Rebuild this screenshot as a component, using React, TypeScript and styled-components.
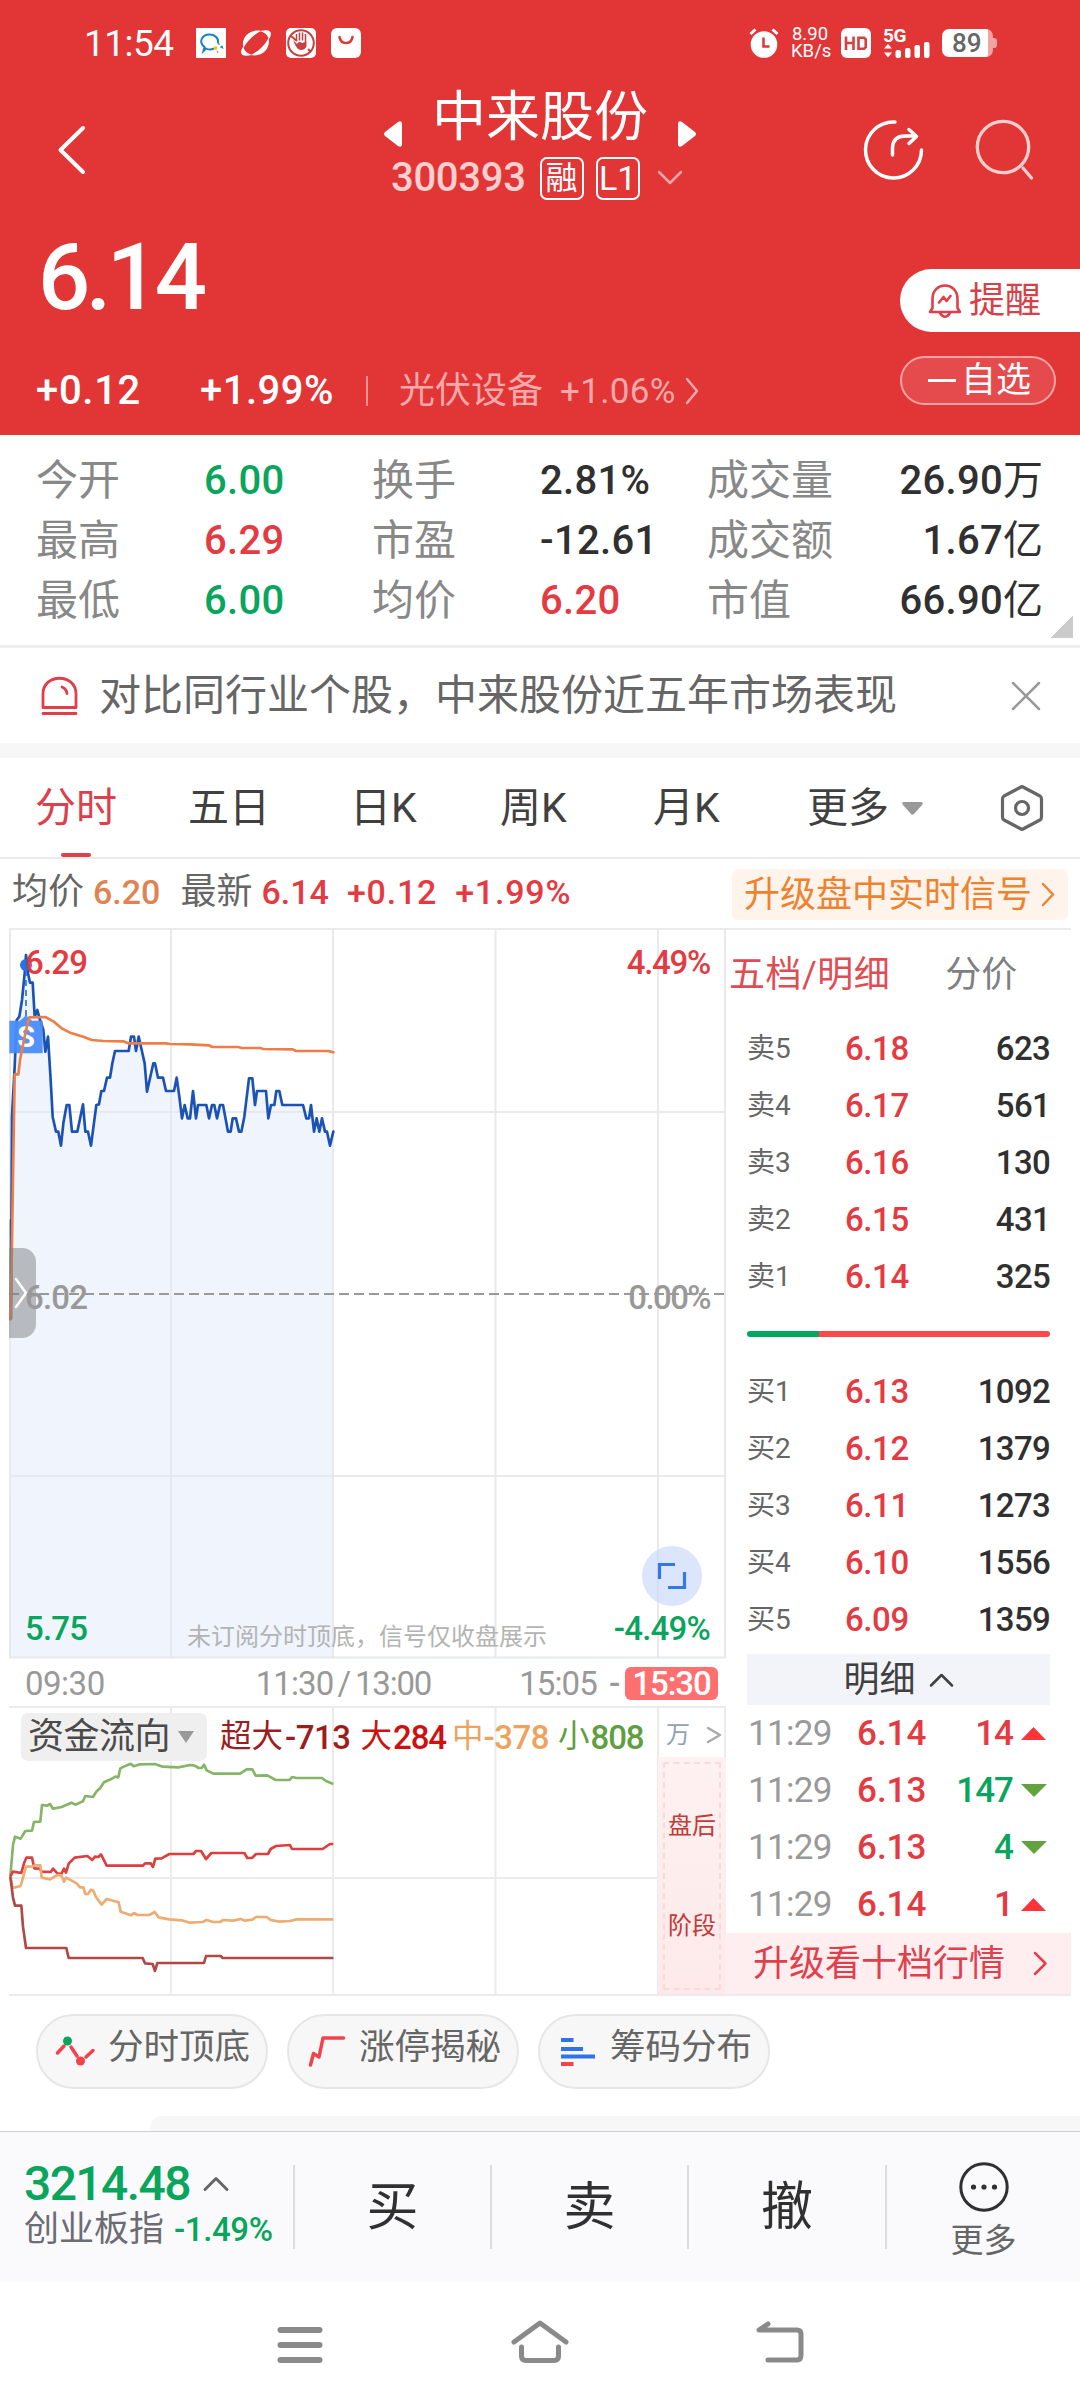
import React from 'react';
import styled, { createGlobalStyle } from 'styled-components';

const RED = '#e23536';
const UP = '#e43b43';
const DOWN = '#0aa55c';
const LINE = '#ebebeb';

const GlobalStyle = createGlobalStyle`
  * { box-sizing: border-box; }
  body {
    margin: 0;
    background: #fff;
    font-family: Roboto, "Noto Sans CJK SC", sans-serif;
  }
  svg { display: block; flex: none; overflow: visible; }
`;

const Screen = styled.div`
  width: 1080px;
  height: 2408px;
  overflow: hidden;
  display: flex;
  flex-direction: column;
`;

const Text = styled.span<{ $size: number; $color?: string; $weight?: number; $ls?: number; $ml?: number }>`
  display: block;
  flex: none;
  line-height: 1;
  white-space: pre;
  font-size: ${p => p.$size}px;
  color: ${p => p.$color ?? 'inherit'};
  font-weight: ${p => p.$weight ?? 400};
  letter-spacing: ${p => p.$ls ?? 0}px;
  margin-left: ${p => p.$ml ?? 0}px;
`;

const Gap = styled.i<{ $w: number }>`
  width: ${p => p.$w}px;
  flex: none;
`;

/* ---------- header ---------- */

const Header = styled.header`
  height: 435px;
  flex: none;
  background: ${RED};
  color: #fff;
`;

const StatusBar = styled.div`
  height: 88px;
  padding: 0 83px 2px 84px;
  display: flex;
  align-items: center;
  justify-content: space-between;
`;

const StatusGroup = styled.div<{ $gap: number }>`
  display: flex;
  align-items: center;
  gap: ${p => p.$gap}px;
`;

const Speed = styled.div`
  width: 38px;
  text-align: center;
  font-size: 18.5px;
  line-height: 17px;
  font-weight: 400;
  white-space: nowrap;
`;

const Battery = styled.div`
  display: flex;
  align-items: center;
`;

const BatteryBody = styled.div`
  width: 51px;
  height: 28px;
  border-radius: 7px;
  background: linear-gradient(90deg, #fff 46px, #f4a3a3 46px);
  color: #666;
  font-size: 26px;
  font-weight: 500;
  line-height: 29px;
  padding-left: 10px;
`;

const BatteryTip = styled.div`
  width: 4px;
  height: 10px;
  border-radius: 0 3px 3px 0;
  background: #f4a3a3;
`;

const TitleBar = styled.div`
  height: 122px;
  display: grid;
  grid-template-columns: 384px 312px 1fr;
`;

const BackSlot = styled.div`
  padding: 36px 0 0 56px;
`;

const TitleStack = styled.div`
  padding-top: 3px;
  display: flex;
  flex-direction: column;
`;

const NameRow = styled.div`
  height: 54px;
  display: flex;
  justify-content: space-between;
  svg { margin-top: 29px; }
`;

const CodeRow = styled.div`
  height: 44px;
  margin-top: 11px;
  padding-left: 7px;
  display: flex;
  align-items: center;
`;

const Badge = styled.span<{ $ml: number }>`
  width: 44px;
  height: 43px;
  margin-left: ${p => p.$ml}px;
  border: 2px solid #fff;
  border-radius: 7px;
  display: flex;
  align-items: center;
  justify-content: center;
`;

const ActionSlot = styled.div`
  display: flex;
  gap: 50px;
  padding: 30px 0 0 166px;
`;

const Quote = styled.div`
  height: 225px;
  display: grid;
  grid-template-columns: 900px 180px;
`;

const QuoteLeft = styled.div`
  padding: 22px 0 0 36px;
`;

const ChangeRow = styled.div`
  height: 40px;
  margin-top: 47px;
  display: flex;
  align-items: center;
`;

const Divider = styled.i<{ $h: number; $color: string }>`
  width: 2px;
  height: ${p => p.$h}px;
  background: ${p => p.$color};
  flex: none;
`;

const QuoteRight = styled.div`
  padding-top: 59px;
  display: flex;
  flex-direction: column;
  gap: 24px;
`;

const AlertButton = styled.div`
  height: 63px;
  border-radius: 32px 0 0 32px;
  background: #fff;
  display: flex;
  align-items: center;
  padding-left: 28px;
`;

const WatchButton = styled.div`
  width: 156px;
  height: 49px;
  border-radius: 25px;
  border: 2px solid #f2a3a4;
  background: #e54b4c;
  display: flex;
  align-items: center;
  padding-left: 26px;
`;

const Dash = styled.i`
  width: 28px;
  height: 3px;
  background: #fff;
  margin-right: 5px;
`;

/* ---------- stats ---------- */

const Stats = styled.section`
  position: relative;
  height: 213px;
  flex: none;
  padding: 16px 37px 0 36px;
  border-bottom: 3px solid #eeeeee;
  display: grid;
  grid-template-columns: 168px 168px 168px 167px 1fr auto;
  grid-auto-rows: 60px;
  align-items: center;
`;

const StatValue = styled.div`
  display: flex;
  align-items: center;
  justify-content: flex-end;
`;

const StatPlain = styled.div`
  display: flex;
  align-items: center;
`;

const Corner = styled.i`
  position: absolute;
  right: 7px;
  bottom: 7px;
  width: 23px;
  height: 23px;
  background: linear-gradient(135deg, transparent 50%, #cbcbcb 50%);
`;

const Banner = styled.section`
  height: 95px;
  flex: none;
  padding: 0 39px 0 40px;
  display: flex;
  align-items: center;
`;

const Spacer = styled.div`
  flex: 1;
`;

const Gutter = styled.div`
  height: 15px;
  flex: none;
  background: #f7f7f7;
`;

/* ---------- tabs ---------- */

const Tabs = styled.nav`
  height: 101px;
  flex: none;
  border-bottom: 2px solid ${LINE};
  display: grid;
  grid-template-columns: 188px 162px 150px 153px 154px 191px 1fr;
`;

const Tab = styled.div<{ $active?: boolean; $pad: number }>`
  padding: 1px 0 0 ${p => p.$pad}px;
  display: flex;
  align-items: center;
  color: ${p => (p.$active ? '#dc404a' : '#404040')};
  position: relative;
`;

const Underline = styled.i`
  position: absolute;
  left: 61px;
  bottom: 0;
  width: 30px;
  height: 4px;
  border-radius: 2px;
  background: #dc404a;
`;

const InfoRow = styled.div`
  height: 69px;
  flex: none;
  padding: 0 12px 3px 12px;
  display: flex;
  align-items: center;
`;

const SignalButton = styled.div`
  width: 336px;
  height: 51px;
  margin-top: 5px;
  border-radius: 7px;
  background: #fef4ec;
  padding: 0 12px;
  display: flex;
  align-items: center;
`;

/* ---------- chart area ---------- */

const Board = styled.main`
  height: 1068px;
  flex: none;
  margin: 0 9px;
  border-top: 2px solid ${LINE};
  border-bottom: 2px solid ${LINE};
  display: grid;
  grid-template-columns: 717px 345px;
`;

const Charts = styled.div`
  display: flex;
  flex-direction: column;
`;

const PricePane = styled.div`
  position: relative;
  height: 729px;
`;

const ChartLabel = styled.div<{ $x?: number; $right?: number; $y: number; $size?: number; $color: string; $weight?: number; $ls?: number }>`
  position: absolute;
  ${p => (p.$right !== undefined ? `right: ${p.$right}px;` : `left: ${p.$x}px;`)}
  top: ${p => p.$y}px;
  font-size: ${p => p.$size ?? 33}px;
  font-weight: ${p => p.$weight ?? 500};
  letter-spacing: ${p => p.$ls ?? -0.8}px;
  line-height: 1;
  white-space: pre;
  color: ${p => p.$color};
`;

const ExpandButton = styled.div`
  position: absolute;
  right: 24px;
  bottom: 53px;
  width: 60px;
  height: 60px;
  border-radius: 50%;
  background: rgba(200, 217, 252, 0.65);
  display: flex;
  align-items: center;
  justify-content: center;
`;

const DrawerHandle = styled.div`
  position: absolute;
  left: 0;
  top: 318px;
  width: 27px;
  height: 90px;
  border-radius: 0 14px 14px 0;
  background: rgba(128, 128, 128, 0.5);
  display: flex;
  align-items: center;
  padding-left: 5px;
`;

const TimeAxis = styled.div`
  height: 47px;
  padding: 2px 8px 0 16px;
  display: flex;
  align-items: center;
  color: #999;
`;

const ClosingTag = styled.div`
  width: 93px;
  height: 33px;
  border-radius: 6px;
  background: #fe7070;
  display: flex;
  align-items: center;
  justify-content: center;
`;

const FlowPane = styled.div`
  position: relative;
  flex: 1;
  border-top: 2px solid ${LINE};
`;

const FlowHeader = styled.div`
  position: absolute;
  inset: 5px 0 auto 12px;
  height: 48px;
  display: flex;
  align-items: center;
`;

const FlowChip = styled.div`
  width: 186px;
  height: 48px;
  border-radius: 7px;
  background: #efefef;
  padding-left: 7px;
  margin-right: 13px;
  display: flex;
  align-items: center;
  gap: 8px;
`;

const UnitCell = styled.div`
  position: absolute;
  left: 650px;
  right: 2px;
  top: 0;
  height: 49px;
  padding: 5px 2px 0 7px;
  background: #fff;
  display: flex;
  align-items: center;
  justify-content: space-between;
`;

const AfterHours = styled.div`
  position: absolute;
  right: 0;
  top: 49px;
  bottom: 0;
  width: 68px;
  padding: 5px 5px 4px 5px;
  background: linear-gradient(#fef1f1, #fde9e9);
`;

const AfterHoursInner = styled.div`
  height: 100%;
  border: 2px dashed #f8dadc;
  border-radius: 2px;
  padding-top: 50px;
  display: flex;
  flex-direction: column;
  align-items: center;
  gap: 76px;
`;

/* ---------- order book ---------- */

const Book = styled.aside`
  display: flex;
  flex-direction: column;
`;

const BookTabs = styled.div`
  height: 90px;
  padding-left: 3px;
  display: flex;
  align-items: center;
`;

const BookRow = styled.div`
  height: 57px;
  padding: 0 21px 0 21px;
  display: grid;
  grid-template-columns: 98px 1fr auto;
  align-items: center;
`;

const RatioBar = styled.div`
  height: 6px;
  margin: 26px 21px;
  border-radius: 3px;
  background: linear-gradient(90deg, #00a95f 72px, #fb484b 72px);
`;

const DetailHeader = styled.div`
  height: 51px;
  margin: 6px 21px 0;
  background: #f3f4f9;
  display: flex;
  align-items: center;
  justify-content: center;
  gap: 13px;
`;

const TradeRow = styled.div`
  height: 57px;
  padding: 0 24px 0 22px;
  display: grid;
  grid-template-columns: 109px 1fr auto 26px;
  align-items: center;
`;

const TradeQty = styled.div`
  padding-right: 8px;
`;

const Upgrade = styled.div`
  margin-top: auto;
  height: 61px;
  background: #feeef0;
  padding: 0 23px 0 27px;
  display: flex;
  align-items: center;
  justify-content: space-between;
`;

/* ---------- footer ---------- */

const Tools = styled.div`
  height: 120px;
  flex: none;
  padding: 18px 0 0 36px;
  display: flex;
  gap: 19px;
`;

const Pill = styled.div`
  width: 232px;
  height: 75px;
  border: 2px solid #e6e6e6;
  border-radius: 38px;
  background: #f7f7f7;
  padding: 0 0 8px 17px;
  display: flex;
  align-items: center;
  gap: 13px;
  svg { margin-top: 7px; }
`;

const NextCard = styled.div`
  height: 15px;
  flex: none;
  margin-left: 150px;
  border-radius: 12px 0 0 0;
  background: #f7f7f7;
`;

const TradeBar = styled.footer`
  height: 151px;
  flex: none;
  border-top: 1px solid #cfcfcf;
  background: #fafafc;
  display: grid;
  grid-template-columns: 293px 2px 195px 2px 195px 2px 196px 2px 1fr;
  align-items: center;
`;

const IndexCell = styled.div`
  padding: 0 0 3px 24px;
  display: flex;
  flex-direction: column;
  gap: 2px;
`;

const Line = styled.div<{ $h: number }>`
  height: ${p => p.$h}px;
  display: flex;
  align-items: center;
`;

const ActionCell = styled.div<{ $pt?: number }>`
  padding-top: ${p => p.$pt ?? 2}px;
  display: flex;
  flex-direction: column;
  align-items: center;
  color: #303030;
`;

const NavBar = styled.nav`
  flex: 1;
  padding: 37px 0 0 277px;
  display: flex;
  align-items: flex-start;
`;

/* ---------- data ---------- */

const K = '#888';
const D = '#303030';

const stats: [string, string, string][][] = [
  [['今开', '6.00', DOWN], ['换手', '2.81%', D], ['成交量', '26.90万', D]],
  [['最高', '6.29', UP], ['市盈', '-12.61', D], ['成交额', '1.67亿', D]],
  [['最低', '6.00', DOWN], ['均价', '6.20', UP], ['市值', '66.90亿', D]],
];

const asks: [string, string, string][] = [
  ['卖5', '6.18', '623'],
  ['卖4', '6.17', '561'],
  ['卖3', '6.16', '130'],
  ['卖2', '6.15', '431'],
  ['卖1', '6.14', '325'],
];

const bids: [string, string, string][] = [
  ['买1', '6.13', '1092'],
  ['买2', '6.12', '1379'],
  ['买3', '6.11', '1273'],
  ['买4', '6.10', '1556'],
  ['买5', '6.09', '1359'],
];

const trades: [string, string, boolean][] = [
  ['6.14', '14', true],
  ['6.13', '147', false],
  ['6.13', '4', false],
  ['6.14', '1', true],
];

const pricePoints =
  '33,1195 36,590 44,440 50,300 58,290 66,240 74,160 78,105 84,160 90,188 98,188 104,290 112,270 120,300 130,330 136,395 144,350 152,480 158,590 168,635 175,635 183,677 190,610 200,555 208,555 216,635 232,635 249,553 256,635 264,635 273,677 289,555 297,553 304,513 312,513 321,473 330,473 337,430 345,393 386,393 393,350 402,350 408,393 416,350 425,390 434,430 441,515 460,430 465,430 474,473 489,473 498,513 522,513 530,473 538,530 546,595 554,555 563,595 570,595 579,513 588,595 594,555 619,555 627,595 636,555 643,555 651,595 660,555 669,555 684,635 692,635 698,595 708,595 717,635 724,635 733,590 747,475 757,475 765,555 771,513 798,513 805,595 813,555 823,555 829,513 838,513 847,555 909,555 919,595 927,595 933,555 942,635 950,595 958,635 966,595 975,635 981,635 990,677 1000,635';

const avgPoints =
  '31,1198 33,1150 44,463 55,463 60,420 78,330 88,292 136,291 160,304 185,325 210,338 250,350 275,360 310,363 370,364 385,370 498,370 510,372 570,373 628,376 636,381 715,381 725,384 780,384 790,387 878,388 888,393 985,393 1000,397';

const flows: [string, string][] = [
  ['#86b567', '31,830 39,735 45,710 62,716 76,693 96,692 102,666 121,665 126,615 142,617 150,612 159,626 185,621 214,608 226,614 249,604 256,588 279,591 290,574 300,565 312,547 332,538 346,530 355,532 361,505 378,497 392,491 401,499 420,493 465,492 488,500 535,502 570,495 584,497 596,504 605,504 612,494 620,511 640,521 720,521 740,508 757,508 767,527 802,526 827,540 868,540 877,531 890,534 966,534 978,543 1000,552'],
  ['#db3f3f', '31,830 39,815 64,819 72,790 79,773 96,773 103,805 118,806 126,815 152,816 159,806 172,820 184,822 192,806 198,818 206,791 224,773 262,768 277,780 285,770 295,771 303,763 320,797 428,797 436,790 452,790 459,801 466,776 485,775 508,762 580,762 588,753 603,753 618,777 634,759 733,759 742,774 756,774 768,762 804,762 812,747 828,738 870,735 876,747 968,747 990,732 1000,732'],
  ['#edac72', '31,830 38,864 62,858 70,830 78,800 98,799 104,796 121,796 125,833 150,838 172,825 184,826 192,845 198,833 230,850 240,862 250,862 256,882 264,882 273,869 280,872 288,891 305,914 320,897 350,905 356,907 362,935 393,946 402,939 412,945 448,945 464,936 476,952 508,958 545,961 570,968 608,966 620,960 640,966 660,966 670,960 700,962 722,957 735,962 757,959 768,951 800,951 812,960 838,965 870,963 890,958 1000,958'],
  ['#b04845', '31,830 39,893 45,917 64,917 69,980 78,1044 199,1044 206,1074 428,1074 435,1090 458,1092 465,1113 472,1089 612,1089 618,1068 662,1068 668,1074 1000,1074'],
];

/* ---------- icons ---------- */

const Chevron = ({ w, h, d, color, sw = 2.5 }: { w: number; h: number; d: string; color: string; sw?: number }) => (
  <svg width={w} height={h} viewBox={`0 0 ${w} ${h}`} fill="none" stroke={color} strokeWidth={sw} strokeLinecap="round" strokeLinejoin="round">
    <path d={d} />
  </svg>
);

const ChatIcon = () => (
  <svg width="30" height="30" viewBox="0 0 30 30">
    <rect width="30" height="30" fill="#fff" />
    <path d="M18 20.500 Q13.500 22.500 10 20.500 L7.500 23 L8.500 19 C2 14 6 6.500 13.500 6.500 C19.500 6.500 23 11 22 15" fill="none" stroke="#1d7fc4" strokeWidth="2" />
    <path d="M21 15.500l2-1 1 3z" fill="#3aa648" />
    <path d="M23.500 19l3-1.500 1 3.500z" fill="#1d7fc4" />
    <path d="M17.500 19l3-1 1 3-3 1z" fill="#f4c31f" />
    <path d="M20.500 22l2 2-1 1.500z" fill="#e2702a" />
  </svg>
);

const PlanetIcon = () => (
  <svg width="30" height="30" viewBox="0 0 30 30" fill="#fff">
    <path d="M2.500 20 C-0.500 10 8 0.500 20 3 C12 7 6 13 2.500 20z" />
    <path d="M27.500 10 C30 20 21.500 29.500 10 27 C18 23 24 17 27.500 10z" />
    <path d="M19 3 Q30 0.500 30 6 Q30 8 27.500 12 Q27.500 7 22.500 4.500z" />
    <path d="M11 27 Q0 29.500 0 24 Q0 22 2.500 18 Q2.500 23 7.500 25.500z" />
  </svg>
);

const HandIcon = () => (
  <svg width="30" height="30" viewBox="0 0 30 30">
    <rect width="30" height="30" rx="5" fill="#fff" />
    <g fill="none" stroke="#c8403f" strokeWidth="2">
      <circle cx="15" cy="15" r="12.800" />
      <path d="M5 8 L11 13 M22 21 L25 24" />
    </g>
    <path d="M10.500 6v7M13.500 4.500v8M16.500 4.500v8M19.500 6v8" stroke="#c8403f" strokeWidth="1.500" />
    <path d="M7 12 L11 16 Q13 12.500 16 15 L20.500 13.500 V18 Q19.500 22 15 22 Q10.500 22 7 12z" fill="#c8403f" />
  </svg>
);

const BagIcon = () => (
  <svg width="30" height="30" viewBox="0 0 30 30">
    <rect width="30" height="30" rx="6" fill="#fff" />
    <path d="M8.500 9 q1 6 6.500 6 t6.500-6" fill="none" stroke={RED} strokeWidth="2.500" strokeLinecap="round" />
  </svg>
);

const AlarmIcon = () => (
  <svg width="30" height="30" viewBox="0 0 30 30" fill="none">
    <circle cx="15" cy="16.500" r="13.300" fill="#fff" />
    <path d="M1.500 6 L6.500 1.500 M28.500 6 L23.500 1.500" stroke="#fff" strokeWidth="3" />
    <path d="M14.500 9.500 V18.500 H20.500" stroke={RED} strokeWidth="2.500" />
  </svg>
);

const HdIcon = () => (
  <svg width="30" height="30" viewBox="0 0 30 30">
    <rect width="30" height="30" rx="6" fill="#fff" />
    <path d="M5 8.500V22M12.500 8.500V22M5 15h7.500M17.500 8.500V22M17.500 9.700h5.500l1.700 1.700v7.700l-1.700 1.700h-5.500" fill="none" stroke="#d8403f" strokeWidth="2.600" />
  </svg>
);

const SignalStack = styled.div`
  width: 47px;
  height: 31px;
  display: flex;
  flex-direction: column;
  justify-content: space-between;
  font-size: 19px;
  font-weight: 700;
  line-height: 15px;
  letter-spacing: -0.5px;
`;

const SignalIcon = () => (
  <SignalStack>
    5G
    <svg width="47" height="16" viewBox="0 15 47 16" fill="#fff">
      <path d="M1 20.500l4-4.500 4 4.500zM1 24.500h8l-4 5z" />
      <rect x="12.500" y="22" width="5.500" height="8" rx="2" />
      <rect x="22" y="20" width="5.500" height="10" rx="2" />
      <rect x="31.500" y="17" width="5.500" height="13" rx="2" />
      <rect x="41" y="14" width="5.500" height="16" rx="2" />
    </svg>
  </SignalStack>
);

const ShareIcon = () => (
  <svg width="62" height="62" viewBox="0 0 62 62" fill="none" stroke="#fff" strokeWidth="3.500" strokeLinecap="round" strokeLinejoin="round">
    <path d="M33 4 A28 28 0 1 0 59.500 32" />
    <path d="M30.500 37 V30 Q31 18 43 18 H54 M47 11.500 L54.500 18.500 L47 25.500" />
  </svg>
);

const SearchIcon = () => (
  <svg width="62" height="64" viewBox="0 0 62 64" fill="none" stroke="#fccfcf" strokeWidth="3.300" strokeLinecap="round">
    <circle cx="29" cy="29" r="25.700" />
    <path d="M49 50 L57.500 60" />
  </svg>
);

const BellIcon = () => (
  <svg width="34" height="36" viewBox="0 0 34 36" fill="none" stroke="#de3f49" strokeWidth="2.600" strokeLinejoin="round" strokeLinecap="round">
    <path d="M4.500 25 V16 C4.500 -2 29.500 -2 29.500 16 V25 L32 29 H2z" />
    <path d="M12 30 q5 7.500 10 0" />
    <path d="M11 19.500 L15.500 14 L18.500 18 L22.500 13" />
  </svg>
);

const SirenIcon = () => (
  <svg width="40" height="40" viewBox="0 0 40 40" fill="none" stroke="#de3f49" strokeWidth="2.800" strokeLinecap="round" strokeLinejoin="round">
    <path d="M3 31.500 V18 C3 -3 36 -3 36 18 V31.500z" />
    <path d="M3 37.500 H36 M22 11 Q26.500 13 27 17.500" />
  </svg>
);

const HexIcon = () => (
  <svg width="44" height="48" viewBox="0 0 44 48" fill="none" stroke="#666" strokeWidth="3.200" strokeLinejoin="round">
    <path d="M22 2.500 L40 12 Q41.500 13 41.500 15 V33 Q41.500 35 40 36 L22 45.500 L4 36 Q2.500 35 2.500 33 V15 Q2.500 13 4 12z" />
    <circle cx="22" cy="24" r="6.500" />
  </svg>
);

const Triangle = ({ up }: { up: boolean }) =>
  up ? (
    <svg width="26" height="14" viewBox="0 0 26 14"><path d="M12.500 0 L25 13 H0z" fill="#fb343a" /></svg>
  ) : (
    <svg width="26" height="14" viewBox="0 0 26 14"><path d="M0 0 H26 L13 13z" fill="#62a340" /></svg>
  );

const PriceChart = () => (
  <svg width="717" height="729" viewBox="9 930 717 729">
    <g transform="translate(0 920) scale(0.333333)">
      <polygon points={`31,2214 ${pricePoints} 1000,2214`} fill="#eff4fd" />
    </g>
    <g stroke="#e4e6ea" strokeOpacity=".85" strokeWidth="2" fill="none">
      <path d="M10 930V1658M171 930V1658M333 930V1658M495.500 930V1658M658 930V1658M725 930V1658" />
      <path d="M9 1112H726M9 1476H726M9 1657.500H726" />
    </g>
    <path d="M9 1294H724" stroke="#999" strokeWidth="2" strokeDasharray="10 5" />
    <g transform="translate(0 920) scale(0.333333)" fill="none" strokeLinejoin="round" strokeLinecap="round">
      <polyline points={pricePoints} stroke="#1a52b5" strokeWidth="8" />
      <path d="M78 150V290" stroke="#2d6fd8" strokeWidth="5" strokeDasharray="18 12" strokeLinecap="butt" />
      <circle cx="78" cy="135" r="18" fill="#2273ee" />
      <path d="M28 302H60L78 286L96 302H128V400H28z" fill="#4a8cfb" fillOpacity=".95" />
      <text x="78" y="381" textAnchor="middle" fill="#fff" fontSize="86" fontWeight="700" fontFamily="Roboto">S</text>
      <path d="M31 1198V900" stroke="#1a52b5" strokeWidth="4" />
      <polyline points={avgPoints} stroke="#ee7d48" strokeWidth="8" />
    </g>
  </svg>
);

const FlowChart = () => (
  <svg width="717" height="286" viewBox="9 1708 717 286">
    <path d="M171 1708V1994M333 1708V1994M495.500 1708V1994M658 1708V1994M725 1708V1994M9 1878H658" stroke={LINE} strokeWidth="2" fill="none" />
    <g transform="translate(0 1600) scale(0.333333)" fill="none" strokeWidth="8" strokeLinejoin="round">
      {flows.map(([color, points]) => (
        <polyline key={color} points={points} stroke={color} />
      ))}
    </g>
  </svg>
);

const TopBottomIcon = () => (
  <svg width="40" height="32" viewBox="0 0 40 32" fill="none" stroke="#f0434c" strokeWidth="3.500" strokeLinecap="round">
    <path d="M2.500 18 L9 11 M16 12 L22 21 M31 22 L38 15.500" />
    <circle cx="12.500" cy="6" r="4.500" fill={DOWN} stroke="none" />
    <circle cx="25.500" cy="26" r="4.500" fill="#f0434c" stroke="none" />
  </svg>
);

const LimitIcon = () => (
  <svg width="40" height="32" viewBox="0 0 40 32" fill="none" stroke="#f0434c" strokeWidth="3.500" strokeLinecap="round" strokeLinejoin="round">
    <path d="M4.500 30 L7.500 18.500 L13 22 L17 3 H37.500" />
  </svg>
);

const ChipsIcon = () => (
  <svg width="40" height="32" viewBox="0 0 40 32" fill="none" stroke="#2f73ea" strokeWidth="4">
    <path d="M4 5H16.500M4 14H26M4 21.500H38" />
    <path d="M4 29H16.500" stroke="#f0434c" />
  </svg>
);

const tools: [string, React.ReactNode][] = [
  ['分时顶底', <TopBottomIcon />],
  ['涨停揭秘', <LimitIcon />],
  ['筹码分布', <ChipsIcon />],
];

/* ---------- page ---------- */

const BookLine = ({ row }: { row: [string, string, string] }) => (
  <BookRow>
    <Text $size={28} $color="#666">{row[0]}</Text>
    <Text $size={33} $weight={500} $color={UP} $ls={-0.4}>{row[1]}</Text>
    <Text $size={33} $weight={500} $color={D} $ls={-0.7}>{row[2]}</Text>
  </BookRow>
);

export default function App() {
  return (
    <Screen>
      <GlobalStyle />
      <Header>
        <StatusBar>
          <StatusGroup $gap={22}>
            <Text $size={37} $ls={-0.5}>11:54</Text>
            <StatusGroup $gap={15}>
              <ChatIcon />
              <PlanetIcon />
              <HandIcon />
              <BagIcon />
            </StatusGroup>
          </StatusGroup>
          <StatusGroup $gap={12}>
            <AlarmIcon />
            <Speed>8.90<br />KB/s</Speed>
            <HdIcon />
            <SignalIcon />
            <Battery>
              <BatteryBody>89</BatteryBody>
              <BatteryTip />
            </Battery>
          </StatusGroup>
        </StatusBar>
        <TitleBar>
          <BackSlot>
            <Chevron w={32} h={52} d="M27 4 L4.500 26 L27 48" color="#fff" sw={4} />
          </BackSlot>
          <TitleStack>
            <NameRow>
              <svg width="18" height="28" viewBox="0 0 18 28"><path d="M18 3 Q17 0 14 2 L1 12 Q-1 14 1 16 L14 26 Q17 28 18 25z" fill="#fff" /></svg>
              <Text $size={54}>中来股份</Text>
              <svg width="18" height="28" viewBox="0 0 18 28"><path d="M0 3 Q1 0 4 2 L17 12 Q19 14 17 16 L4 26 Q1 28 0 25z" fill="#fff" /></svg>
            </NameRow>
            <CodeRow>
              <Text $size={40} $weight={500} $color="#fdd0d0" $ls={-0.3}>300393</Text>
              <Badge $ml={14}><Text $size={32}>融</Text></Badge>
              <Badge $ml={12}><Text $size={34}>L1</Text></Badge>
              <Gap $w={17} />
              <Chevron w={26} h={16} d="M2 2 L13 13 L24 2" color="#f3a5a6" />
            </CodeRow>
          </TitleStack>
          <ActionSlot>
            <ShareIcon />
            <SearchIcon />
          </ActionSlot>
        </TitleBar>
        <Quote>
          <QuoteLeft>
            <Text $size={92} $weight={500} $ls={-4.5} $ml={2}>6.14</Text>
            <ChangeRow>
              <Text $size={40} $weight={500} $ls={0.7}>+0.12</Text>
              <Text $size={40} $weight={500} $ml={59} $ls={0.5}>+1.99%</Text>
              <Gap $w={32} />
              <Divider $h={30} $color="#ee8f90" />
              <Text $size={36} $color="#f5a9aa" $ml={31}>光伏设备</Text>
              <Text $size={35} $color="#f5a9aa" $ml={17} $ls={0.3}>+1.06%</Text>
              <Gap $w={8} />
              <Chevron w={16} h={28} d="M3 2 L13 14 L3 26" color="#f5a9aa" />
            </ChangeRow>
          </QuoteLeft>
          <QuoteRight>
            <AlertButton>
              <BellIcon />
              <Text $size={36} $color="#d84048" $ml={7}>提醒</Text>
            </AlertButton>
            <WatchButton>
              <Dash />
              <Text $size={35}>自选</Text>
            </WatchButton>
          </QuoteRight>
        </Quote>
      </Header>

      <Stats>
        {stats.flat().map(([label, value, color], i) => {
          const unit = /[万亿]$/.test(value) ? value.slice(-1) : '';
          const Value = unit ? StatValue : StatPlain;
          return (
            <React.Fragment key={i}>
              <Text $size={42} $color={K}>{label}</Text>
              <Value>
                <Text $size={40} $weight={500} $color={color} $ls={0.3}>{unit ? value.slice(0, -1) : value}</Text>
                {unit && <Text $size={40} $color={color}>{unit}</Text>}
              </Value>
            </React.Fragment>
          );
        })}
        <Corner />
      </Stats>

      <Banner>
        <SirenIcon />
        <Text $size={42} $color="#666" $ml={19}>对比同行业个股，中来股份近五年市场表现</Text>
        <Spacer />
        <Chevron w={30} h={30} d="M2 2 L28 28 M28 2 L2 28" color="#999" />
      </Banner>
      <Gutter />

      <Tabs>
        <Tab $active $pad={35}><Text $size={41}>分时</Text><Underline /></Tab>
        <Tab $pad={0}><Text $size={41}>五日</Text></Tab>
        <Tab $pad={0}><Text $size={41}>日K</Text></Tab>
        <Tab $pad={0}><Text $size={41}>周K</Text></Tab>
        <Tab $pad={0}><Text $size={41}>月K</Text></Tab>
        <Tab $pad={0}>
          <Text $size={41}>更多</Text>
          <Gap $w={13} />
          <svg width="21" height="13" viewBox="0 0 21 13"><path d="M2 0H19Q22 0 20 3L12 12Q10.500 13.500 9 12L1 3Q-1 0 2 0z" fill="#999" /></svg>
        </Tab>
        <Tab $pad={2}><HexIcon /></Tab>
      </Tabs>

      <InfoRow>
        <Text $size={36} $color="#666">均价</Text>
        <Text $size={34} $weight={500} $color="#e08350" $ml={9}>6.20</Text>
        <Text $size={36} $color="#666" $ml={20}>最新</Text>
        <Text $size={34} $weight={500} $color={UP} $ml={9}>6.14</Text>
        <Text $size={34} $weight={500} $color={UP} $ml={18} $ls={0.8}>+0.12</Text>
        <Text $size={34} $weight={500} $color={UP} $ml={18} $ls={0.8}>+1.99%</Text>
        <Spacer />
        <SignalButton>
          <Text $size={36} $color="#ee832f">升级盘中实时信号</Text>
          <Spacer />
          <Chevron w={15} h={25} d="M2 2 L12 12.500 L2 23" color="#ee832f" />
        </SignalButton>
      </InfoRow>

      <Board>
        <Charts>
          <PricePane>
            <PriceChart />
            <ChartLabel $x={16} $y={16} $color={UP}>6.29</ChartLabel>
            <ChartLabel $right={16} $y={16} $color={UP} $ls={-1.3}>4.49%</ChartLabel>
            <DrawerHandle>
              <Chevron w={14} h={32} d="M2 2 L12 16 L2 30" color="#fff" />
            </DrawerHandle>
            <ChartLabel $x={16} $y={351} $color="#999">6.02</ChartLabel>
            <ChartLabel $right={16} $y={351} $color="#999" $ls={-1.6}>0.00%</ChartLabel>
            <ChartLabel $x={16} $y={682} $color={DOWN}>5.75</ChartLabel>
            <ChartLabel $right={16} $y={682} $color={DOWN}>-4.49%</ChartLabel>
            <ChartLabel $x={178} $y={695} $color="#b3b3b3" $size={24} $weight={400} $ls={0}>未订阅分时顶底，信号仅收盘展示</ChartLabel>
            <ExpandButton>
              <svg width="30" height="28" viewBox="0 0 30 28" fill="none" stroke="#3478e8" strokeWidth="3.200">
                <path d="M2.500 17 V2.500 H18 M27.500 10 V25.500 H11" />
              </svg>
            </ExpandButton>
          </PricePane>
          <TimeAxis>
            <Text $size={33} $ls={-0.5}>09:30</Text>
            <Text $size={33} $ml={151} $ls={-0.9}>11:30</Text>
            <Text $size={33} $ml={4}>/</Text>
            <Text $size={33} $ml={4} $ls={-1.2}>13:00</Text>
            <Text $size={33} $ml={88} $ls={-0.9}>15:05</Text>
            <Text $size={33} $ml={12} $weight={500}>-</Text>
            <Spacer />
            <ClosingTag><Text $size={33} $weight={500} $color="#fff" $ls={-1}>15:30</Text></ClosingTag>
          </TimeAxis>
          <FlowPane>
            <FlowChart />
            <FlowHeader>
              <FlowChip>
                <Text $size={36} $color="#4a4a4a" $ls={-0.5}>资金流向</Text>
                <svg width="16" height="12" viewBox="0 0 16 12"><path d="M0 0H16L8 12z" fill="#999" /></svg>
              </FlowChip>
              <Text $size={31.5} $color="#9c1d1d">超大</Text>
              <Text $size={33} $color="#9c1d1d" $weight={500} $ml={2} $ls={-0.5}>-713</Text>
              <Text $size={31.5} $color="#cf1010" $ml={10}>大</Text>
              <Text $size={33} $color="#cf1010" $weight={500} $ls={-1.1} $ml={1}>284</Text>
              <Text $size={31.5} $color="#eda35e" $ml={6}>中</Text>
              <Text $size={33} $color="#eda35e" $weight={500} $ls={-0.5}>-378</Text>
              <Text $size={31.5} $color="#5f9f3f" $ml={9}>小</Text>
              <Text $size={33} $color="#5f9f3f" $weight={500} $ls={-1.1} $ml={1}>808</Text>
            </FlowHeader>
            <UnitCell>
              <Text $size={24} $color="#8fa3b2">万</Text>
              <Chevron w={16} h={18} d="M2 2 L14 9 L2 16" color="#aaa" />
            </UnitCell>
            <AfterHours>
              <AfterHoursInner>
                <Text $size={24} $color="#c23a3a">盘后</Text>
                <Text $size={24} $color="#c23a3a">阶段</Text>
              </AfterHoursInner>
            </AfterHours>
          </FlowPane>
        </Charts>

        <Book>
          <BookTabs>
            <Text $size={36} $color="#df4d54" $ls={0.5}>五档/明细</Text>
            <Text $size={36} $color="#808080" $ml={55}>分价</Text>
          </BookTabs>
          {asks.map(row => <BookLine key={row[0]} row={row} />)}
          <RatioBar />
          {bids.map(row => <BookLine key={row[0]} row={row} />)}
          <DetailHeader>
            <Text $size={36} $color="#404040">明细</Text>
            <Chevron w={25} h={16} d="M2 13.500 L12.500 3 L23 13.500" color="#404040" />
          </DetailHeader>
          {trades.map(([price, qty, up], i) => (
            <TradeRow key={i}>
              <Text $size={35} $color="#999" $ls={-0.7}>11:29</Text>
              <Text $size={35} $weight={500} $color={UP}>{price}</Text>
              <TradeQty><Text $size={35} $weight={500} $color={up ? UP : DOWN} $ls={-1}>{qty}</Text></TradeQty>
              <Triangle up={up} />
            </TradeRow>
          ))}
          <Upgrade>
            <Text $size={36} $color="#e03f4c">升级看十档行情</Text>
            <Chevron w={15} h={25} d="M2 2 L12.500 12.500 L2 23" color="#e03f4c" />
          </Upgrade>
        </Book>
      </Board>

      <Tools>
        {tools.map(([label, icon]) => (
          <Pill key={label}>
            {icon}
            <Text $size={35.5} $color="#666">{label}</Text>
          </Pill>
        ))}
      </Tools>
      <NextCard />

      <TradeBar>
        <IndexCell>
          <Line $h={46}>
            <Text $size={48} $weight={500} $color={DOWN} $ls={-1.6}>3214.48</Text>
            <Gap $w={13} />
            <Chevron w={26} h={16} d="M2 13.500 L13 2.500 L24 13.500" color="#666" sw={3} />
          </Line>
          <Line $h={42}>
            <Text $size={35} $color="#6c6c74">创业板指</Text>
            <Text $size={33} $weight={500} $color={DOWN} $ml={10} $ls={-0.4}>-1.49%</Text>
          </Line>
        </IndexCell>
        <Divider $h={84} $color="#dcdcde" />
        <ActionCell><Text $size={52}>买</Text></ActionCell>
        <Divider $h={84} $color="#dcdcde" />
        <ActionCell><Text $size={52}>卖</Text></ActionCell>
        <Divider $h={84} $color="#dcdcde" />
        <ActionCell><Text $size={52}>撤</Text></ActionCell>
        <Divider $h={84} $color="#dcdcde" />
        <ActionCell $pt={16}>
          <svg width="50" height="50" viewBox="0 0 50 50" fill="#303030">
            <circle cx="25" cy="25" r="23.200" fill="none" stroke="#303030" strokeWidth="3" />
            <circle cx="14.500" cy="25" r="2.600" /><circle cx="25" cy="25" r="2.600" /><circle cx="35.500" cy="25" r="2.600" />
          </svg>
          <Line $h={56}><Text $size={33} $color="#666">更多</Text></Line>
        </ActionCell>
      </TradeBar>

      <NavBar>
        <svg width="526" height="50" viewBox="277 2319 526 50" fill="none" stroke="#8a8a8a" strokeWidth="6" strokeLinecap="round" strokeLinejoin="round">
          <path d="M280.500 2330H319.500M280.500 2345H319.500M280.500 2360H319.500" />
          <path d="M514 2342 L540 2323 L566 2342" strokeWidth="5" />
          <path d="M521.500 2347 V2356 Q521.500 2360.500 526 2360.500 H554 Q558.500 2360.500 558.500 2356 V2347" strokeWidth="5" />
          <path d="M768 2324 L759 2330 H797 Q801 2330 801 2334 V2355 Q801 2360 797 2360 H768" strokeWidth="5" />
        </svg>
      </NavBar>
    </Screen>
  );
}
